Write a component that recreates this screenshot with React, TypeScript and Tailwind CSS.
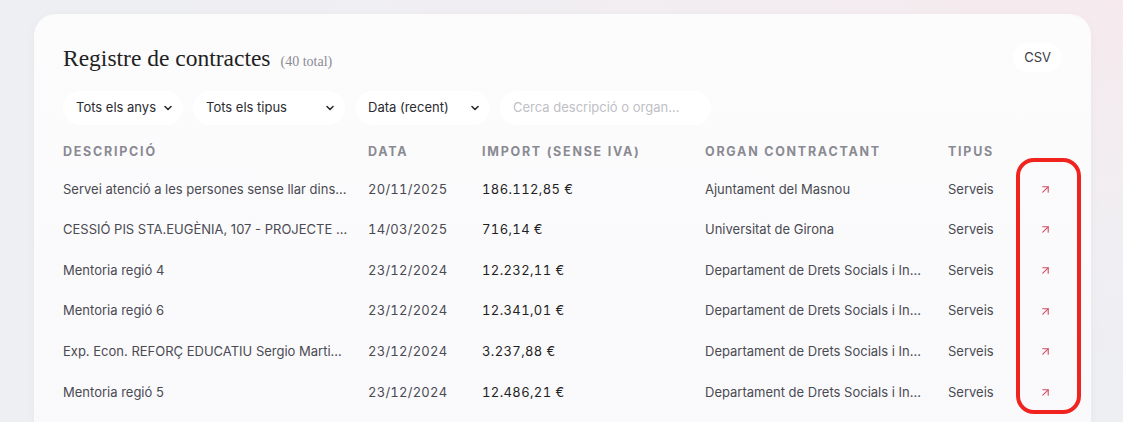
import React from "react";
import { ChevronDown, ArrowUpRight } from "lucide-react";

type Row = {
  desc: string;
  date: string;
  amount: string;
  organ: string;
  type: string;
};

const rows: Row[] = [
  { desc: "Servei atenció a les persones sense llar dins el municipi", date: "20/11/2025", amount: "186.112,85 €", organ: "Ajuntament del Masnou", type: "Serveis" },
  { desc: "CESSIÓ PIS STA.EUGÈNIA, 107 - PROJECTE HABITATGE", date: "14/03/2025", amount: "716,14 €", organ: "Universitat de Girona", type: "Serveis" },
  { desc: "Mentoria regió 4", date: "23/12/2024", amount: "12.232,11 €", organ: "Departament de Drets Socials i Inclusió", type: "Serveis" },
  { desc: "Mentoria regió 6", date: "23/12/2024", amount: "12.341,01 €", organ: "Departament de Drets Socials i Inclusió", type: "Serveis" },
  { desc: "Exp. Econ. REFORÇ EDUCATIU Sergio Martinez", date: "23/12/2024", amount: "3.237,88 €", organ: "Departament de Drets Socials i Inclusió", type: "Serveis" },
  { desc: "Mentoria regió 5", date: "23/12/2024", amount: "12.486,21 €", organ: "Departament de Drets Socials i Inclusió", type: "Serveis" },
];

const cols = "grid grid-cols-[305px_114px_223px_243px_76px_1fr] items-center";

function Select({ label, width }: { label: string; width: string }) {
  return (
    <div className={`flex h-[34px] items-center justify-between rounded-full bg-white pl-[13px] pr-[9px] text-[13px] text-[#2b2b30] ${width}`}>
      <span>{label}</span>
      <ChevronDown className="h-[12px] w-[12px] text-[#2b2b30]" strokeWidth={3.2} />
    </div>
  );
}

export default function App() {
  return (
    <div className="h-[422px] w-full overflow-hidden bg-[radial-gradient(ellipse_at_top_right,#f6eaee_0%,#f1eef2_35%,#edeff3_70%)] font-['Inter',sans-serif]">
      <div className="pl-[35px] pr-[33px] pt-[15px]">
        <div className="relative h-[440px] rounded-[20px] bg-[linear-gradient(180deg,#fcfcfd_0%,#f9f9fb_100%)] px-[28px] pt-[29px] shadow-[0_0_0_1px_rgba(255,255,255,0.8),0_2px_12px_rgba(30,30,60,0.04)]">
          {/* Header */}
          <div className="flex items-start justify-between">
            <div className="flex items-baseline gap-[10px]">
              <h2 className="font-['Liberation_Serif',serif] text-[23.5px] leading-[28px] text-[#1f1f24]">
                Registre de contractes
              </h2>
              <span className="font-['Liberation_Serif',serif] text-[14px] text-[#8b8b93]">(40 total)</span>
            </div>
            <button className="-mt-[1px] h-[29px] rounded-full bg-white px-[11px] text-[13px] text-[#3a3a40]">
              CSV
            </button>
          </div>

          {/* Filters */}
          <div className="mt-[19px] flex gap-[10px]">
            <Select label="Tots els anys" width="w-[120px]" />
            <Select label="Tots els tipus" width="w-[152px]" />
            <Select label="Data (recent)" width="w-[135px]" />
            <div className="flex h-[34px] w-[211px] items-center rounded-full bg-white px-[13px] text-[13px] text-[#c0c0c6]">
              Cerca descripció o organ...
            </div>
          </div>

          {/* Table */}
          <div className="mt-[17px]">
            <div className={`${cols} h-[20px] text-[12.5px] font-bold uppercase tracking-[0.14em] text-[#8a8a92]`}>
              <div>Descripció</div>
              <div>Data</div>
              <div>Import (sense IVA)</div>
              <div>Organ contractant</div>
              <div>Tipus</div>
              <div />
            </div>
            <div className="mt-[7px]">
              {rows.map((r, i) => (
                <div key={i} className={`${cols} h-[40.6px] text-[13px] text-[#4a4a52]`}>
                  <div className="truncate pr-[20px]">{r.desc}</div>
                  <div className="tabular-nums tracking-[0.02em]">{r.date}</div>
                  <div className="tabular-nums tracking-[0.03em] text-[#1f1f24]">{r.amount}</div>
                  <div className="truncate pr-[24px]">{r.organ}</div>
                  <div>{r.type}</div>
                  <div className="flex justify-center pl-[4px]">
                    <ArrowUpRight className="h-[13px] w-[13px] text-[#d44a60]" strokeWidth={2} />
                  </div>
                </div>
              ))}
            </div>
          </div>

          {/* Annotation highlight */}
          <div className="pointer-events-none absolute left-[981px] top-[143px] h-[256px] w-[65px] rounded-[18px] border-[4px] border-[#f0231f]" />
        </div>
      </div>
    </div>
  );
}
